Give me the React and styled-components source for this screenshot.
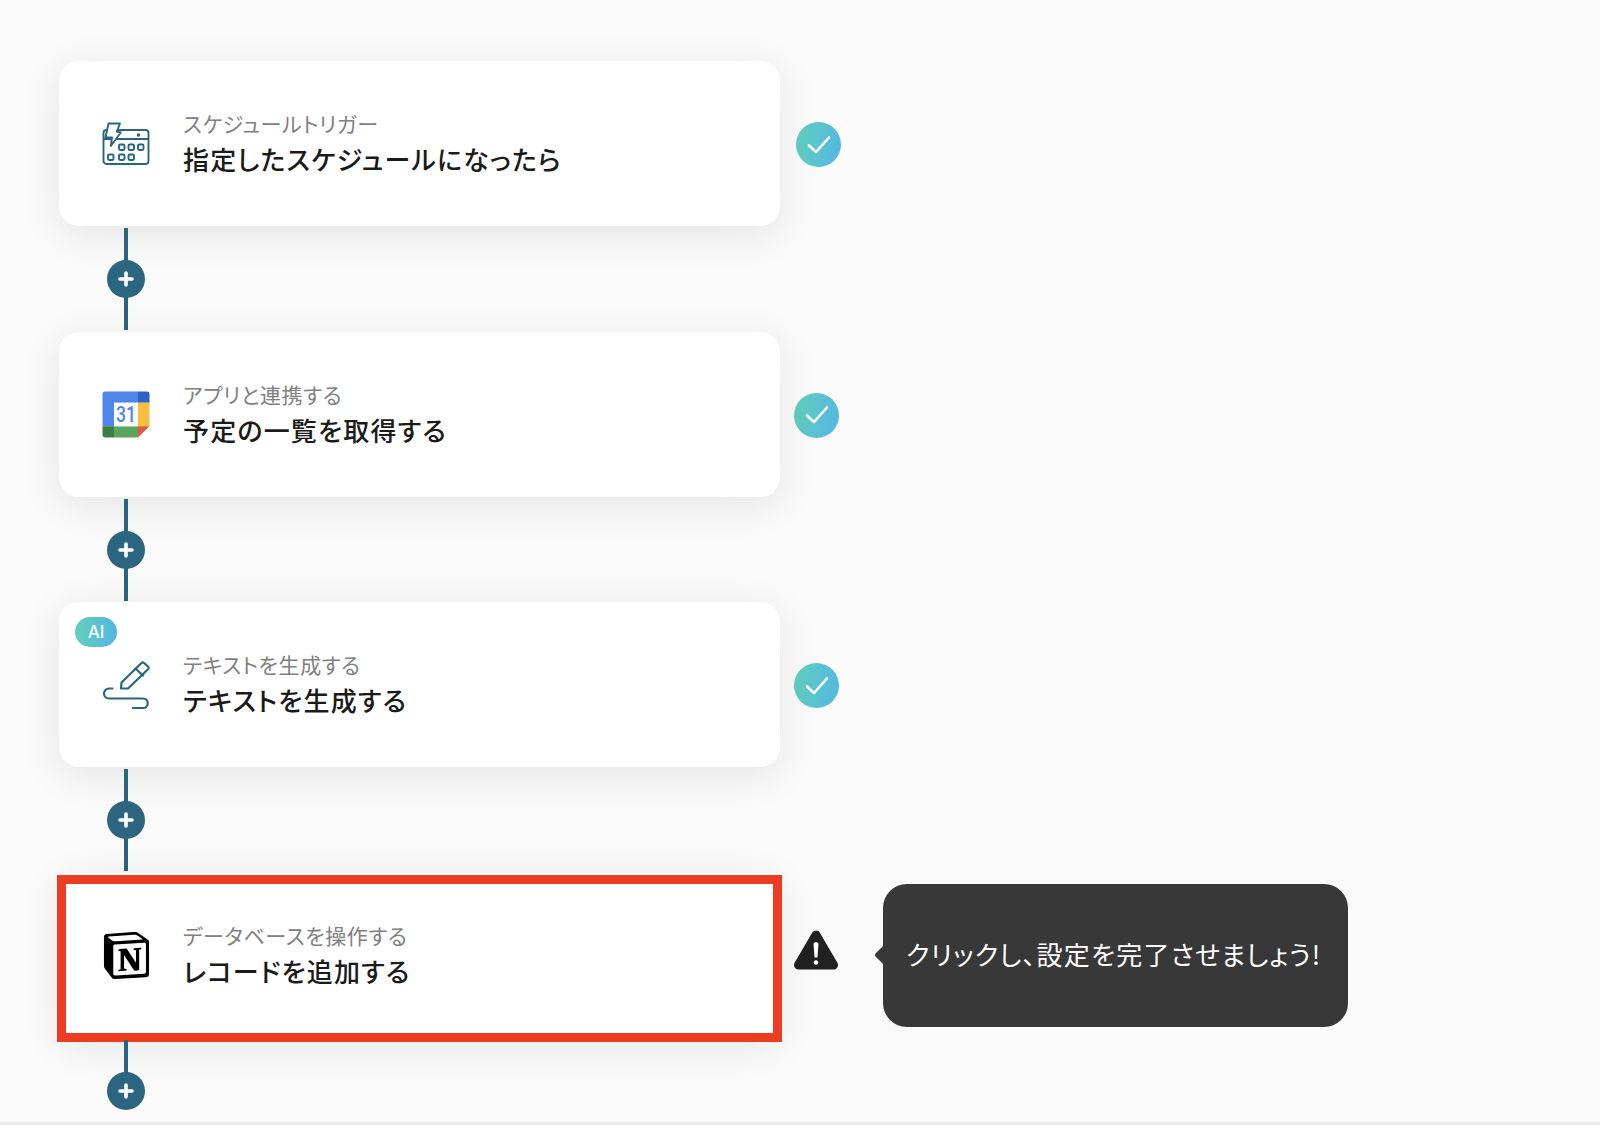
import React from 'react';
import styled, { createGlobalStyle } from 'styled-components';
import { SiNotion } from 'react-icons/si';

const steps = [
    { sub: 'スケジュールトリガー', title: '指定したスケジュールになったら', icon: 'calendar', status: 'check', statusLeft: 16 },
    { sub: 'アプリと連携する', title: '予定の一覧を取得する', icon: 'google', status: 'check', statusLeft: 14 },
    { sub: 'テキストを生成する', title: 'テキストを生成する', icon: 'pen', status: 'check', statusLeft: 14, ai: true },
    { sub: 'データベースを操作する', title: 'レコードを追加する', icon: 'notion', status: 'warning', statusLeft: 14, active: true },
];

function CalendarIcon() {
    return (
        <svg width="48" height="46" viewBox="0 0 48 46" fill="none" stroke="#2a6580" strokeWidth="1.9" strokeLinejoin="round">
            <rect x="1.5" y="9" width="45" height="34" rx="3" />
            <path d="M1.5 18H46.5" />
            <circle cx="36.5" cy="14" r="0.8" fill="#2a6580" />
            <rect x="17" y="23.5" width="5.5" height="5.5" rx="1.2" />
            <rect x="26.5" y="23.5" width="5.5" height="5.5" rx="1.2" />
            <rect x="36" y="23.5" width="5.5" height="5.5" rx="1.2" />
            <rect x="6" y="33.5" width="5.5" height="5.5" rx="1.2" />
            <rect x="17" y="33.5" width="5.5" height="5.5" rx="1.2" />
            <rect x="26.5" y="33.5" width="5.5" height="5.5" rx="1.2" />
            <path d="M6.5 2.5H18L14.8 10.5L18.8 11.5L8.8 25L10 16.5H3.5Z" fill="#fff" />
        </svg>
    );
}

function GoogleCalendarIcon() {
    return (
        <svg width="48" height="47" viewBox="0 0 48 48" preserveAspectRatio="none">
            <path d="M3 0.5H36V12H12V36H0.5V3A2.5 2.5 0 0 1 3 0.5Z" fill="#4f86ec" />
            <path d="M36 0.5H45A2.5 2.5 0 0 1 47.5 3V12H36Z" fill="#2f62c9" />
            <path d="M36 12H47.5V36H36Z" fill="#f3bf3d" />
            <path d="M12 36H36V47.5H12Z" fill="#58a65c" />
            <path d="M0.5 36H12V47.5H3A2.5 2.5 0 0 1 0.5 45Z" fill="#3b7d43" />
            <path d="M36 36H47.5L36 47.5Z" fill="#e2583e" />
            <rect x="12" y="12" width="24" height="24" fill="#fff" />
            <text x="24" y="32" textAnchor="middle" fontFamily="Roboto, sans-serif" fontWeight="500" fontSize="22" textLength="20" lengthAdjust="spacingAndGlyphs" fill="#4f86ec">31</text>
        </svg>
    );
}

function PenIcon() {
    return (
        <svg width="48" height="48" viewBox="0 0 48 48" fill="none" stroke="#2a6580" strokeWidth="2.2" strokeLinecap="round" strokeLinejoin="round">
            <path d="M19 27.5L19.5 21.5L39.5 2A2 2 0 0 1 42 2L46 5.5A2 2 0 0 1 46 8.2L26 27.5Z" />
            <path d="M33.5 7.5L41 14.5" />
            <path d="M10.5 27.5H7A5 5 0 0 0 7 37.5H41A4.7 4.7 0 0 1 41 47H31" />
        </svg>
    );
}

function StepIcon({ name }) {
    if (name === 'calendar') return <CalendarIcon />;
    if (name === 'google') return <GoogleCalendarIcon />;
    if (name === 'pen') return <PenIcon />;
    return <SiNotion size={47} color="#000" />;
}

function App() {
    return (
        <>
            <GlobalStyle />
            <Page>
                <Flow>
                    {steps.map((step, index) => (
                        <Step key={step.title}>
                            <Row>
                                <Card>
                                    {step.ai && <AiBadge>AI</AiBadge>}
                                    <IconBox>
                                        <StepIcon name={step.icon} />
                                    </IconBox>
                                    <Texts>
                                        <SubTitle>{step.sub}</SubTitle>
                                        <Title>{step.title}</Title>
                                    </Texts>
                                    {step.active && <Highlight />}
                                </Card>
                                {step.status === 'check' ? (
                                    <CheckCircle $left={step.statusLeft}>
                                        <svg width="24" height="20" viewBox="0 0 24 20" fill="none" stroke="#fff" strokeWidth="2.6" strokeLinecap="round" strokeLinejoin="round">
                                            <path d="M2 10.5L9 17L22 2.5" />
                                        </svg>
                                    </CheckCircle>
                                ) : (
                                    <WarningBox $left={step.statusLeft}>
                                        <svg width="44" height="40" viewBox="0 0 44 40">
                                            <path d="M22 5L39.5 35H4.5Z" fill="#212121" stroke="#212121" strokeWidth="9" strokeLinejoin="round" />
                                            <path d="M19.5 13.5Q22 10.5 24.5 13.5L23.5 27Q22 28.5 20.5 27Z" fill="#fff" />
                                            <circle cx="22" cy="32.5" r="2.3" fill="#fff" />
                                        </svg>
                                    </WarningBox>
                                )}
                                {step.active && <Tooltip>クリックし、設定を完了させましょう!</Tooltip>}
                            </Row>
                            <Connector $last={index === steps.length - 1}>
                                <PlusButton>
                                    <svg width="16" height="16" viewBox="0 0 16 16" stroke="#fff" strokeWidth="3.6" strokeLinecap="round">
                                        <path d="M8 2V14M2 8H14" />
                                    </svg>
                                </PlusButton>
                            </Connector>
                        </Step>
                    ))}
                </Flow>
                <BottomLine />
            </Page>
        </>
    );
}

const GlobalStyle = createGlobalStyle`
    html, body {
        margin: 0;
        padding: 0;
        background: #fafafa;
        overflow: hidden;
    }
    * {
        box-sizing: border-box;
    }
`;
const Page = styled.div`
    height: 1125px;
    display: flex;
    flex-direction: column;
    justify-content: space-between;
    padding-top: 61px;
    font-family: "Noto Sans CJK JP", "Noto Sans", sans-serif;
    background: #fafafa;
`;
const Flow = styled.div`
    padding-left: 59px;
    display: flex;
    flex-direction: column;
`;
const Step = styled.div`
    display: flex;
    flex-direction: column;
`;
const Row = styled.div`
    height: 165px;
    display: flex;
    align-items: center;
`;
const Card = styled.div`
    position: relative;
    width: 721px;
    height: 165px;
    flex-shrink: 0;
    display: flex;
    align-items: center;
    padding-left: 43px;
    background: #fff;
    border-radius: 20px;
    box-shadow: 0 8px 40px rgba(0, 0, 0, 0.09);
`;
const Highlight = styled.div`
    position: absolute;
    top: 2px;
    left: -2px;
    right: -2px;
    bottom: -4px;
    border: 9px solid #ec3c22;
`;
const AiBadge = styled.span`
    position: absolute;
    top: 15px;
    left: 16px;
    width: 42px;
    height: 30px;
    display: flex;
    align-items: center;
    justify-content: center;
    border-radius: 15px;
    color: #fff;
    font-family: Inter, sans-serif;
    font-size: 17px;
    font-weight: 500;
    background: linear-gradient(90deg, #62d0bb, #54b6e4);
`;
const IconBox = styled.div`
    width: 48px;
    height: 48px;
    flex-shrink: 0;
    display: flex;
    align-items: center;
    justify-content: center;
`;
const Texts = styled.div`
    margin: -1px 0 0 33px;
    display: flex;
    flex-direction: column;
    gap: 4px;
    font-feature-settings: "palt";
`;
const SubTitle = styled.span`
    font-size: 21px;
    line-height: 28px;
    letter-spacing: 0.6px;
    color: #808080;
`;
const Title = styled.span`
    font-size: 26px;
    line-height: 36px;
    letter-spacing: 1.2px;
    font-weight: 500;
    color: #1a1a1a;
`;
const CheckCircle = styled.div`
    width: 45px;
    height: 45px;
    margin-left: ${(props) => props.$left}px;
    margin-top: 2px;
    display: flex;
    align-items: center;
    justify-content: center;
    border-radius: 50%;
    background: linear-gradient(100deg, #62d0bb, #54b6e4);
`;
const WarningBox = styled.div`
    align-self: flex-start;
    width: 44px;
    height: 40px;
    margin-left: ${(props) => props.$left}px;
    margin-top: 57px;
`;
const Tooltip = styled.div`
    position: relative;
    align-self: flex-start;
    width: 465px;
    height: 143px;
    margin-top: 11px;
    margin-left: 45px;
    flex-shrink: 0;
    display: flex;
    align-items: center;
    padding: 0 0 3px 23px;
    border-radius: 24px;
    background: #383838;
    color: #fff;
    font-size: 26px;
    letter-spacing: 1.2px;
    font-feature-settings: "palt";
    white-space: nowrap;

    &::before {
        content: "";
        position: absolute;
        left: -6px;
        top: 50%;
        width: 14px;
        height: 14px;
        margin-top: -7px;
        border-radius: 2px;
        background: #383838;
        transform: rotate(45deg);
    }
`;
const Connector = styled.div`
    position: relative;
    width: 4px;
    height: ${(props) => (props.$last ? '50px' : '102px')};
    margin: 2px 0 ${(props) => (props.$last ? '0' : '1.67px')} 65px;
    background: #2a6580;
`;
const PlusButton = styled.div`
    position: absolute;
    top: 32px;
    left: -17px;
    width: 38px;
    height: 38px;
    display: flex;
    align-items: center;
    justify-content: center;
    border-radius: 50%;
    background: #2c6580;
`;
const BottomLine = styled.div`
    height: 3px;
    background: #e9e9e9;
`;

export default App;
